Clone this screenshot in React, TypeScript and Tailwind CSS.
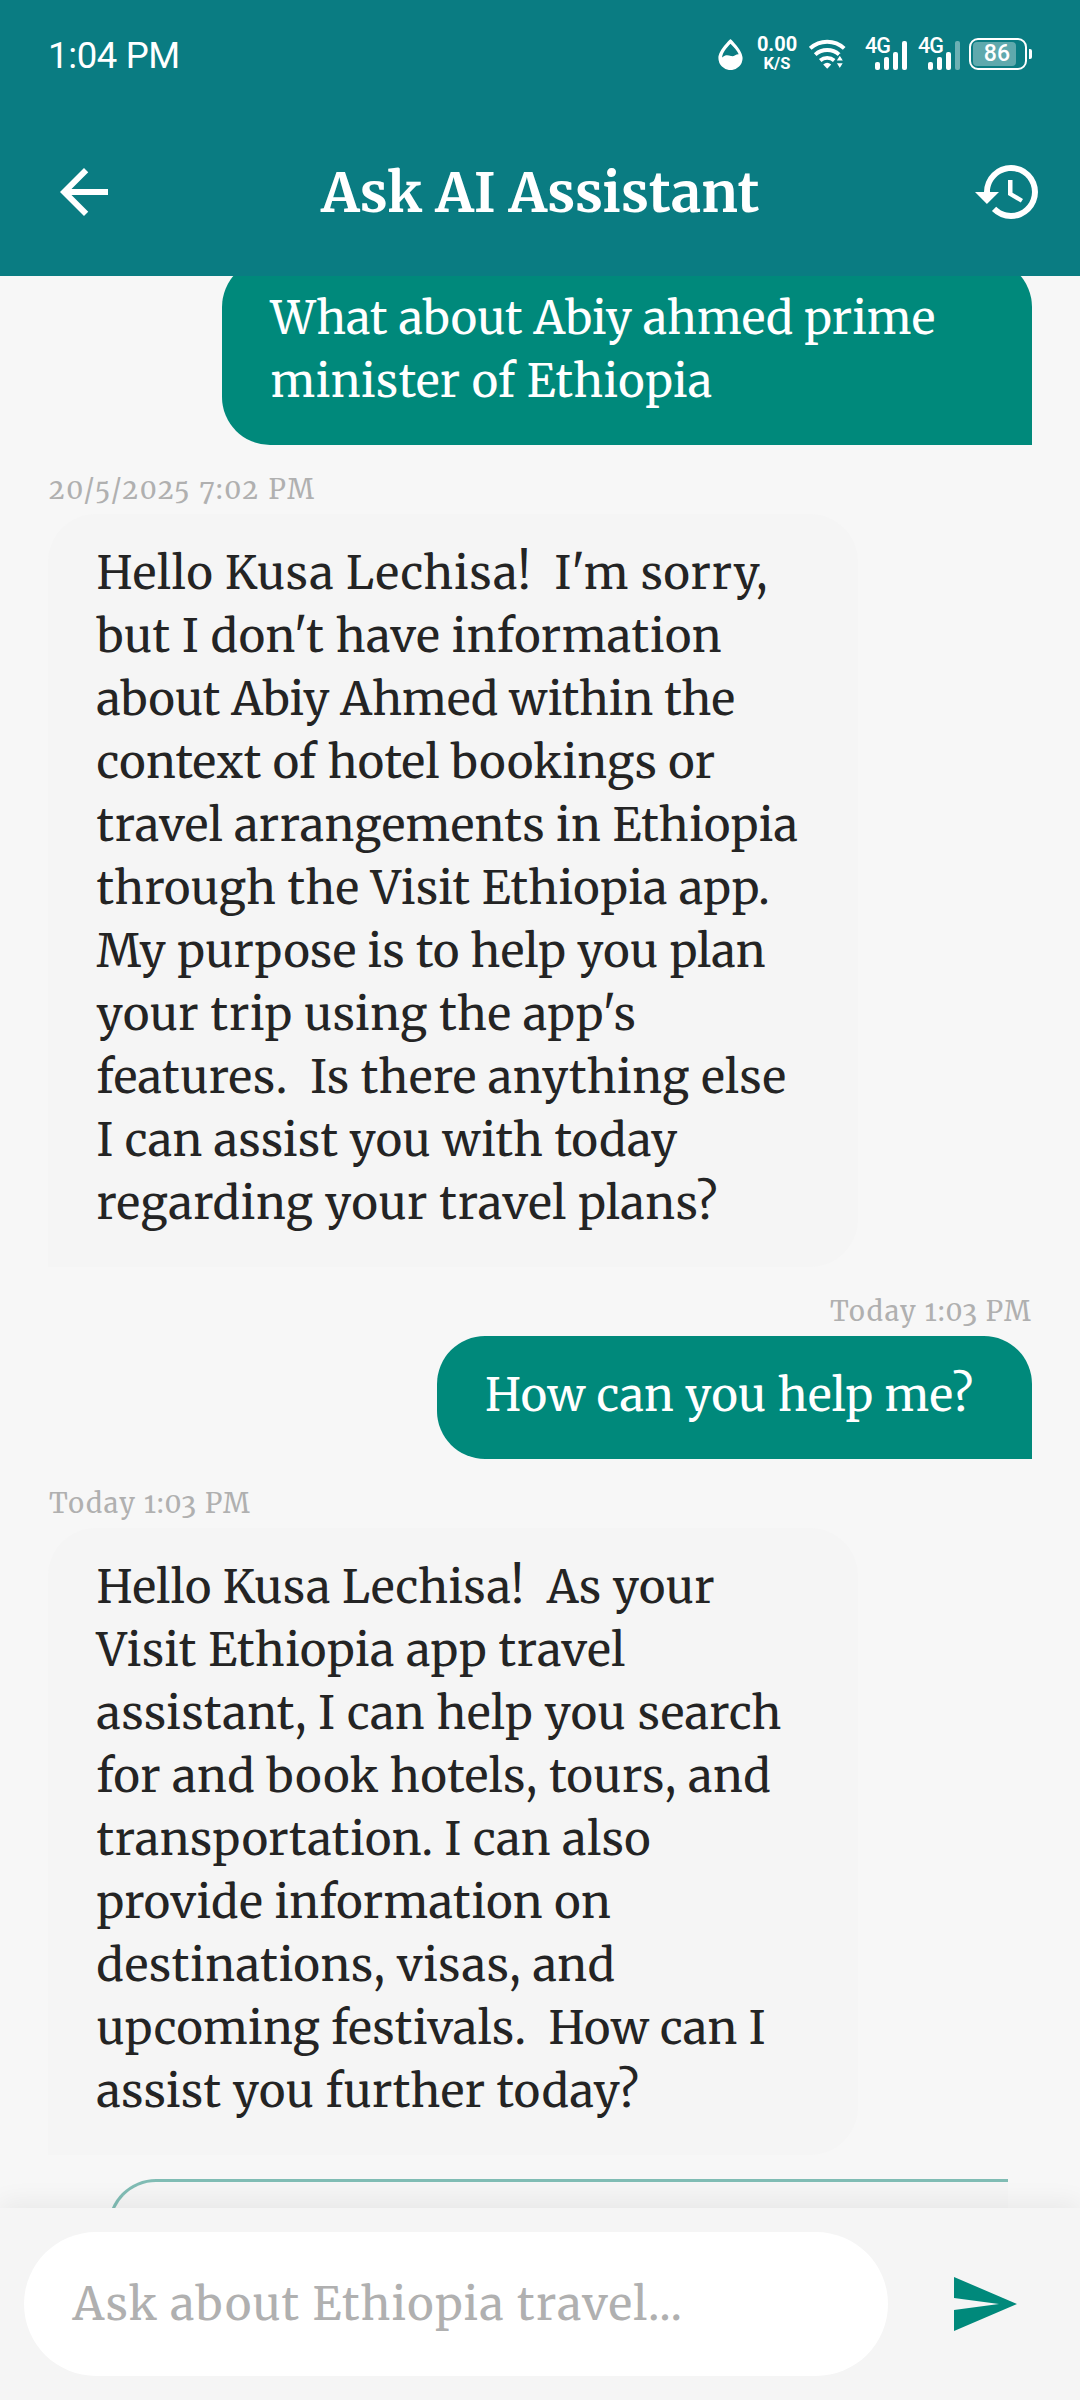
import { MdArrowBack, MdHistory, MdSend } from "react-icons/md";

const serif = "font-['Merriweather','DejaVu_Serif_Condensed','DejaVu_Serif',serif]";

type Line = [text: string, tracking: string];

const firstQuestion: Line[] = [
  ["What about Abiy ahmed prime", "tracking-[0.15px]"],
  ["minister of Ethiopia", "tracking-[0.5px]"],
];

const firstAnswer: Line[] = [
  ["Hello Kusa Lechisa!  I'm sorry,", "tracking-[0.85px]"],
  ["but I don't have information", "tracking-[0.64px]"],
  ["about Abiy Ahmed within the", "tracking-[0.1px]"],
  ["context of hotel bookings or", "tracking-[0.4px]"],
  ["travel arrangements in Ethiopia", "tracking-[0.48px]"],
  ["through the Visit Ethiopia app.", "tracking-[0.52px]"],
  ["My purpose is to help you plan", "tracking-[0.36px]"],
  ["your trip using the app's", "tracking-[0.63px]"],
  ["features.  Is there anything else", "tracking-[0.58px]"],
  ["I can assist you with today", "tracking-[0.43px]"],
  ["regarding your travel plans?", "tracking-[0.66px]"],
];

const secondQuestion: Line[] = [["How can you help me?", "tracking-[0.36px]"]];

const secondAnswer: Line[] = [
  ["Hello Kusa Lechisa!  As your", "tracking-[0.48px]"],
  ["Visit Ethiopia app travel", "tracking-[0.61px]"],
  ["assistant, I can help you search", "tracking-[0.6px]"],
  ["for and book hotels, tours, and", "tracking-[0.62px]"],
  ["transportation. I can also", "tracking-[0.51px]"],
  ["provide information on", "tracking-[0.47px]"],
  ["destinations, visas, and", "tracking-[0.6px]"],
  ["upcoming festivals.  How can I", "tracking-[0.36px]"],
  ["assist you further today?", "tracking-[0.51px]"],
];

function DropIcon() {
  return (
    <svg width="25" height="31" viewBox="0 0 25 31">
      <path d="M12.5 0C12.5 0 .4 11 .4 19a12.1 12.1 0 0 0 24.2 0C24.6 11 12.5 0 12.5 0Z" fill="#fff" />
      <path d="M12.5 4.8C8.6 9 4.6 13.5 4 18.6C7.5 15.4 10 16.2 13 17C16.2 17.8 17.6 15 20.7 15.2C19.2 11.6 15.6 8 12.5 4.8Z" fill="#0a7c82" />
    </svg>
  );
}

function WifiIcon() {
  return (
    <svg width="37" height="30" viewBox="0 0 37 30" fill="none" stroke="#fff" strokeWidth="3.9">
      <path d="M1.2 9.4A25 25 0 0 1 35.2 9.4" />
      <path d="M6.2 15.6A18 18 0 0 1 30.2 15.6" />
      <path d="M11.2 21.4A11 11 0 0 1 25.2 21.4" />
      <path d="M14.2 25.4Q18.2 22.2 22.2 25.4L18.2 29.8Z" fill="#fff" stroke="none" />
      <path d="M26.8 22L30.8 15.6L34.8 22ZM26.8 23.6H34.8L30.8 30Z" fill="#fff" stroke="#0a7c82" strokeWidth="1.2" />
    </svg>
  );
}

function SignalIcon({ weak = false }: { weak?: boolean }) {
  return (
    <div className="relative h-[32px] w-[43px]">
      <span className="absolute top-0 left-0 font-[Roboto] text-[21.5px] leading-[16px] font-medium tracking-[-0.9px]">4G</span>
      <div className="flex h-full items-end justify-end gap-[4.3px] pr-px">
        <i className="h-[8px] w-[4.7px] rounded-[2px] bg-white" />
        <i className="h-[13px] w-[4.7px] rounded-[2px] bg-white" />
        <i className="h-[18px] w-[4.7px] rounded-[2px] bg-white" />
        <i className={weak ? "h-[29px] w-[4.7px] rounded-[2px] bg-white/40" : "h-[29px] w-[4.7px] rounded-[2px] bg-white"} />
      </div>
    </div>
  );
}

function Battery() {
  return (
    <div className="flex items-center gap-[2px]">
      <div className="h-[32px] w-[58px] rounded-[9px] border-2 border-white p-[2px]">
        <div className="flex h-full w-[43px] items-center justify-end rounded-[4px] bg-white/35 pt-px pr-[6px] font-[Roboto] text-[23px] font-medium">
          86
        </div>
      </div>
      <div className="h-[10px] w-[3px] rounded-r-[2px] bg-white" />
    </div>
  );
}

function StatusBar() {
  return (
    <div className="flex h-[108px] items-center px-[48px] font-[Roboto]">
      <span className="pt-[4px] text-[36.5px] leading-none tracking-[-0.35px]">1:04 PM</span>
      <div className="ml-auto flex items-center">
        <DropIcon />
        <div className="ml-[13px] flex w-[42px] flex-col items-center pb-[2px] font-bold">
          <span className="text-[20px] leading-[21px]">0.00</span>
          <span className="text-[16.5px] leading-[18px]">K/S</span>
        </div>
        <div className="ml-[11px]"><WifiIcon /></div>
        <div className="ml-[19px]"><SignalIcon /></div>
        <div className="ml-[10px]"><SignalIcon weak /></div>
        <div className="ml-[8px]"><Battery /></div>
      </div>
    </div>
  );
}

function TopBar() {
  return (
    <header className="z-10 h-[276px] shrink-0 bg-[#0a7c82] text-white">
      <StatusBar />
      <div className="flex h-[168px] items-center justify-between pr-[36px] pl-[48px]">
        <MdArrowBack size={72} />
        <h1 className="pt-px pr-[11px] text-[54px] leading-[72px] font-bold tracking-[0.2px]">Ask AI Assistant</h1>
        <MdHistory size={72} />
      </div>
    </header>
  );
}

function Stamp({ text, className = "" }: { text: string; className?: string }) {
  return (
    <div className={`flex h-[69px] shrink-0 pt-[26px] pl-px text-[27px] leading-[36px] text-[#b0b0b0] oldstyle-nums ${className}`}>
      <span>{text}</span>
    </div>
  );
}

function Lines({ lines }: { lines: Line[] }) {
  return (
    <>
      {lines.map(([text, tracking]) => (
        <span key={text} className={`block ${tracking}`}>{text}</span>
      ))}
    </>
  );
}

function Question({ lines, width }: { lines: Line[]; width: string }) {
  return (
    <p className={`${width} ml-auto shrink-0 rounded-[48px] rounded-br-none bg-[#00897b] pt-[28px] pb-[32px] pl-[48.5px] text-[45px] leading-[63px] whitespace-pre text-white`}>
      <Lines lines={lines} />
    </p>
  );
}

function Answer({ lines }: { lines: Line[] }) {
  return (
    <p className="w-[810px] shrink-0 rounded-[48px] rounded-bl-none bg-[#f5f5f5] pt-[28px] pb-[32px] pl-[48.5px] text-[45px] leading-[63px] whitespace-pre text-[#242424]">
      <Lines lines={lines} />
    </p>
  );
}

export default function App() {
  return (
    <div className={`${serif} flex h-[2400px] w-[1080px] flex-col overflow-hidden bg-[#f7f7f7]`}>
      <TopBar />
      <main className="-mt-[17.5px] flex min-h-0 flex-1 flex-col overflow-hidden px-[48px]">
        <Question lines={firstQuestion} width="w-[810px]" />
        <Stamp text="20/5/2025 7:02 PM" className="tracking-[2.1px]" />
        <Answer lines={firstAnswer} />
        <Stamp text="Today 1:03 PM" className="justify-end tracking-[1.35px]" />
        <Question lines={secondQuestion} width="w-[595.5px]" />
        <Stamp text="Today 1:03 PM" className="tracking-[1.35px]" />
        <Answer lines={secondAnswer} />
        <div className="mt-[24px] ml-[60px] h-[200px] w-[900px] shrink-0 rounded-tl-[48px] border-[3px] border-r-0 border-[#80bcb4] bg-[#f5f5f5]" />
      </main>
      <footer className="z-10 flex h-[192px] shrink-0 items-center bg-[#f5f5f5] pl-[24px] shadow-[0_-6px_24px_rgba(0,0,0,0.06)]">
        <div className="flex h-[144px] w-[864px] items-center rounded-full bg-white pl-[48.5px]">
          <span className="text-[45px] leading-[63px] tracking-[1.33px] text-[#b0b0b0]">Ask about Ethiopia travel...</span>
        </div>
        <MdSend size={72} className="ml-[60px] text-[#00897b]" />
      </footer>
    </div>
  );
}
